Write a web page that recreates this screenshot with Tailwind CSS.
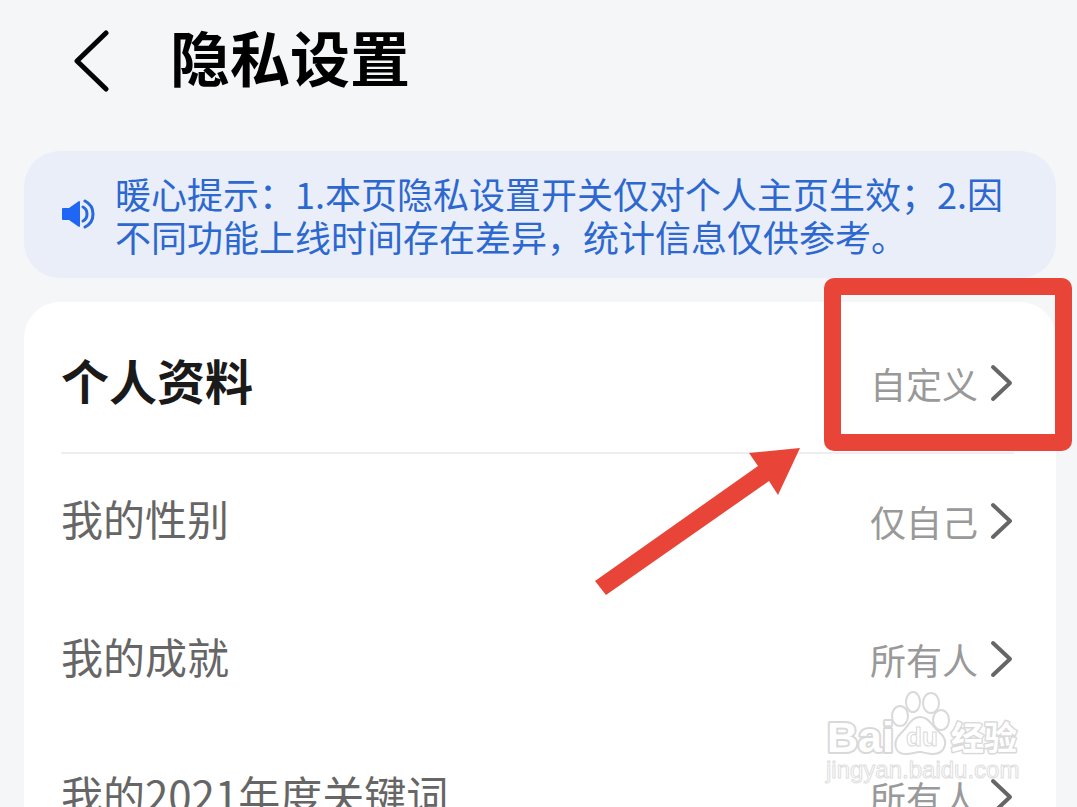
<!DOCTYPE html>
<html lang="zh-CN">
<head>
  <meta charset="UTF-8" />
  <meta name="viewport" content="width=device-width, initial-scale=1.0" />
  <title>隐私设置</title>
  <script src="https://cdn.jsdelivr.net/npm/@tailwindcss/browser@4"></script>
</head>
<body class="bg-[#f5f6f8] text-[#666666] min-h-screen overflow-x-hidden font-['Noto_Sans_CJK_SC',sans-serif]">

  <header class="flex items-center gap-[58px] h-[151px] pl-[72px] pb-7">
    <a href="#" aria-label="返回">
      <svg class="block w-10 h-16" viewBox="0 0 40 64" fill="none" stroke="#050505" stroke-width="5" stroke-linecap="round" stroke-linejoin="round">
        <path d="M34 3 L5 31 L34 59" />
      </svg>
    </a>
    <h1 class="pb-3 text-[60px] leading-[80px] font-bold text-black">隐私设置</h1>
  </header>

  <main class="pl-6 pr-[21px]">
    <!-- 提示 -->
    <div class="flex items-center gap-5 h-[127px] pl-[37px] pr-10 rounded-[36px] bg-[#e9eef9]">
      <svg class="w-[34px] h-8 shrink-0" viewBox="0 0 34 32" fill="none" stroke="#2869dc" stroke-width="3" stroke-linecap="round">
        <path d="M2 9 H8 L18 2 Q19 2 19 3 V27 Q19 28 18 28 L8 21 H2 Q1 21 1 20 V10 Q1 9 2 9 Z" fill="#1f66f5" stroke="none" />
        <path d="M22 8 Q26 10 26 15 Q26 20 22 22" />
        <path d="M24 2 Q32 6 32 15 Q32 24 24 28" />
      </svg>
      <p class="text-[36px] leading-[43px] text-[#2c68cf]">暖心提示：1.本页隐私设置开关仅对个人主页生效；2.因不同功能上线时间存在差异，统计信息仅供参考。</p>
    </div>

    <section class="relative mt-6 pl-[37px] pr-[42px] bg-white rounded-[36px]">
      <div class="flex items-center justify-between h-[152px] pt-3 border-b-2 border-[#eeeeee]">
        <h2 class="pb-2 text-[48px] font-bold text-[#1a1a1a]">个人资料</h2>
        <a href="#" class="flex items-center gap-3 text-[36px] text-[#999999]">
          自定义
          <svg class="w-6 h-10" viewBox="0 0 24 40" fill="none" stroke="#666666" stroke-width="4" stroke-linecap="round" stroke-linejoin="round"><path d="M3 4 L20 20 L3 36" /></svg>
        </a>
      </div>

      <ul>
        <li class="flex items-center justify-between h-[138px] pb-1">
          <span class="pb-2 text-[42px]">我的性别</span>
          <a href="#" class="flex items-center gap-3 text-[36px] text-[#999999]">
            仅自己
            <svg class="w-6 h-10" viewBox="0 0 24 40" fill="none" stroke="#666666" stroke-width="4" stroke-linecap="round" stroke-linejoin="round"><path d="M3 4 L20 20 L3 36" /></svg>
          </a>
        </li>
        <li class="flex items-center justify-between h-[138px] pb-1">
          <span class="pb-2 text-[42px]">我的成就</span>
          <a href="#" class="flex items-center gap-3 text-[36px] text-[#999999]">
            所有人
            <svg class="w-6 h-10" viewBox="0 0 24 40" fill="none" stroke="#666666" stroke-width="4" stroke-linecap="round" stroke-linejoin="round"><path d="M3 4 L20 20 L3 36" /></svg>
          </a>
        </li>
        <li class="flex items-center justify-between h-[138px] pb-1">
          <span class="pb-2 text-[42px]">我的2021年度关键词</span>
          <a href="#" class="flex items-center gap-3 text-[36px] text-[#999999]">
            所有人
            <svg class="w-6 h-10" viewBox="0 0 24 40" fill="none" stroke="#666666" stroke-width="4" stroke-linecap="round" stroke-linejoin="round"><path d="M3 4 L20 20 L3 36" /></svg>
          </a>
        </li>
      </ul>

      <!-- 红框和箭头 -->
      <div class="absolute -top-6 -right-4 w-[248px] h-[173px] border-[17px] border-[#e84538] rounded-[10px]"></div>
      <svg class="absolute top-[144px] right-[256px] w-[206px] h-[150px]" viewBox="0 0 206 150">
        <path d="M206 2 L184 49 L175 35 L12 149 L1 135 L164 20 L155 7 Z" fill="#e84538" />
      </svg>

      <!-- 水印 -->
      <svg class="absolute top-[386px] right-[34px] w-[200px] h-[100px]" viewBox="0 0 200 100" fill="#ffffff" stroke="#d9d9d9" stroke-width="2" stroke-linejoin="round">
        <text x="5" y="64" font-size="43" stroke-width="4" class="font-['Liberation_Sans',sans-serif] font-bold [paint-order:stroke]">Bai</text>
        <ellipse cx="78" cy="28" rx="8" ry="10" />
        <ellipse cx="91" cy="14" rx="7" ry="10" />
        <ellipse cx="109" cy="15" rx="8" ry="10" />
        <ellipse cx="119" cy="32" rx="8" ry="10" />
        <path d="M98 29 C107 29 110 38 117 44 C128 53 123 66 111 66 C105 66 102 64 98 64 C93 64 90 66 84 66 C72 66 70 54 79 45 C86 39 89 29 98 29 Z" />
        <text x="84" y="58" font-size="26" stroke-width="1" class="font-['Liberation_Sans',sans-serif] font-bold">du</text>
        <text x="129" y="62" font-size="33" stroke-width="3" class="font-['Noto_Sans_CJK_SC',sans-serif] font-bold [paint-order:stroke]">经验</text>
        <text x="4" y="90" font-size="24" stroke="#dedede" stroke-width="1" class="font-['Liberation_Sans',sans-serif]">jingyan.baidu.com</text>
      </svg>
    </section>
  </main>

</body>
</html>
